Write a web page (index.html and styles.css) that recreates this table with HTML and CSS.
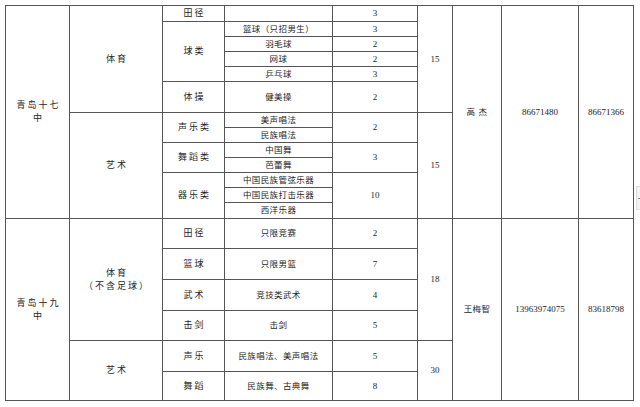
FILE: index.html
```html
<!DOCTYPE html>
<html lang="zh">
<head>
<meta charset="utf-8">
<title>招生表</title>
<link rel="stylesheet" href="styles.css">
</head>
<body>
<div class="page">
  <div class="sheet">
    <!-- 青岛十七中 -->
    <div class="cell r13 big">青岛十七<br>中</div>
    <div class="cell r6 big">体育</div>
    <div class="cell big">田径</div>
    <div class="cell"></div>
    <div class="cell num">3</div>
    <div class="cell r6 num">15</div>
    <div class="cell r13 name wide">高杰</div>
    <div class="cell r13 num">86671480</div>
    <div class="cell r13 num">86671366</div>

    <div class="cell r4 big">球类</div>
    <div class="cell small">篮球（只招男生）</div>
    <div class="cell num">3</div>

    <div class="cell small">羽毛球</div>
    <div class="cell num">2</div>

    <div class="cell small">网球</div>
    <div class="cell num">2</div>

    <div class="cell small">乒乓球</div>
    <div class="cell num">3</div>

    <div class="cell big">体操</div>
    <div class="cell small">健美操</div>
    <div class="cell num">2</div>

    <div class="cell r7 big">艺术</div>
    <div class="cell r2 big">声乐类</div>
    <div class="cell small">美声唱法</div>
    <div class="cell r2 num">2</div>
    <div class="cell r7 num">15</div>

    <div class="cell small">民族唱法</div>

    <div class="cell r2 big">舞蹈类</div>
    <div class="cell small">中国舞</div>
    <div class="cell r2 num">3</div>

    <div class="cell small">芭蕾舞</div>

    <div class="cell r3 big">器乐类</div>
    <div class="cell small">中国民族管弦乐器</div>
    <div class="cell r3 num">10</div>

    <div class="cell small">中国民族打击乐器</div>

    <div class="cell small">西洋乐器</div>

    <!-- 青岛十九中 -->
    <div class="cell r6 big">青岛十九<br>中</div>
    <div class="cell r4 big">体育<br>（不含足球）</div>
    <div class="cell big">田径</div>
    <div class="cell small">只限竞赛</div>
    <div class="cell num">2</div>
    <div class="cell r4 num">18</div>
    <div class="cell r6 name">王梅智</div>
    <div class="cell r6 num">13963974075</div>
    <div class="cell r6 num">83618798</div>

    <div class="cell big">篮球</div>
    <div class="cell small">只限男篮</div>
    <div class="cell num">7</div>

    <div class="cell big">武术</div>
    <div class="cell small">竞技类武术</div>
    <div class="cell num">4</div>

    <div class="cell big">击剑</div>
    <div class="cell small">击剑</div>
    <div class="cell num">5</div>

    <div class="cell r2 big">艺术</div>
    <div class="cell big">声乐</div>
    <div class="cell small">民族唱法、美声唱法</div>
    <div class="cell num">5</div>
    <div class="cell r2 num">30</div>

    <div class="cell big">舞蹈</div>
    <div class="cell small">民族舞、古典舞</div>
    <div class="cell num">8</div>
  </div>
  <div class="handle"><span class="handle-mark"></span></div>
</div>
</body>
</html>
```

FILE: styles.css
```css
html, body {
  margin: 0;
  padding: 0;
  background: #ffffff;
}

.page {
  position: relative;
  width: 640px;
  height: 407px;
  padding: 5px 0 0 5px;
  box-sizing: border-box;
  overflow: hidden;
}

.sheet {
  display: grid;
  grid-template-columns: 63px 92px 61px 107px 84px 34px 48px 76px 54px;
  grid-template-rows: 15px 14px 14px 14px 14px 30px 14px 14px 14px 14px 14px 14px 15px 29px 30px 30px 29px 30px 28px;
  gap: 1px;
  padding: 1px;
  background: #555555;
  width: max-content;
  font-family: "Liberation Serif", "Noto Sans CJK SC", serif;
  color: #1e1e1e;
}

.cell {
  background: #ffffff;
  display: flex;
  align-items: center;
  justify-content: center;
  text-align: center;
  line-height: 13px;
  white-space: nowrap;
  overflow: hidden;
}

.r2 { grid-row: span 2; }
.r3 { grid-row: span 3; }
.r4 { grid-row: span 4; }
.r6 { grid-row: span 6; }
.r7 { grid-row: span 7; }
.r13 { grid-row: span 13; }

.big {
  font-size: 9px;
  letter-spacing: 2px;
  padding-left: 2px;
}

.small {
  font-size: 8.5px;
  letter-spacing: 0.4px;
}

.name {
  font-size: 8.5px;
  letter-spacing: 0.3px;
}

.name.wide {
  letter-spacing: 3.5px;
  padding-left: 3px;
}

.num {
  font-size: 9px;
}

.handle {
  position: absolute;
  left: 636px;
  top: 186px;
  width: 6px;
  height: 24px;
  background: #f2f2f2;
  border: 1px solid #dddddd;
  box-sizing: border-box;
  display: flex;
  align-items: center;
  justify-content: center;
}

.handle-mark {
  display: block;
  width: 3px;
  height: 1px;
  background: #888888;
}
```
